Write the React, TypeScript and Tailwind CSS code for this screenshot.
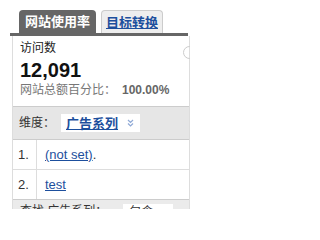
import React from "react";

export default function App() {
  return (
    <div
      className="relative w-[190px] h-[209px] overflow-hidden bg-white"
      style={{ fontFamily: '"Liberation Sans", "Noto Sans CJK SC", sans-serif' }}
    >
      <div className="flex items-end gap-[5px] pl-[19px] pt-[10px] h-[33px]">
        <div className="flex h-[23px] w-[77px] items-center justify-center rounded-t-[4px] bg-[#666666] text-[13px] font-bold leading-none text-white">
          网站使用率
        </div>
        <div className="flex h-[23px] w-[62px] items-center justify-center rounded-t-[4px] border border-b-0 border-[#cccccc] bg-[#eeeeee] text-[13px] font-bold leading-none text-[#1d4f9d] underline">
          目标转换
        </div>
      </div>
      <div className="ml-[10px] h-[3px] w-[178px] bg-[#666666]" />
      <div className="ml-[12px] w-[178px] border-l border-r border-[#dddddd]">
        <div className="relative pl-[7px] pt-[4px] pb-[8px]">
          <div className="text-[12px] leading-[16px] text-[#222222]">访问数</div>
          <div className="mt-[3px] text-[20px] font-bold leading-[23px] text-[#111111]">12,091</div>
          <div className="flex items-center text-[12px] leading-[16px] text-[#777777]">
            <span>网站总额百分比：</span>
            <span className="ml-[6px] font-bold text-[#666666]">100.00%</span>
          </div>
          <div className="absolute left-[170px] top-[10px] h-[13px] w-[13px] rounded-full border border-[#cccccc]" />
        </div>
        <div className="flex h-[34px] items-center border-t border-b border-[#cccccc] bg-[#e6e6e6] pl-[6px]">
          <span className="text-[12px] text-[#333333]">维度：</span>
          <div className="ml-[6px] flex h-[18px] w-[79px] items-center bg-white pl-[5px]">
            <span className="text-[13px] font-bold leading-none text-[#1d4f9d] underline">广告系列</span>
            <svg className="ml-[9px]" width="7" height="10" viewBox="0 0 7 10">
              <path d="M1 2 L3.5 4.5 L6 2 M1 5.5 L3.5 8 L6 5.5" fill="none" stroke="#8fa9d6" strokeWidth="1.2" />
            </svg>
          </div>
        </div>
        <div className="flex h-[30px] border-b border-[#dddddd]">
          <div className="flex w-[24px] items-center border-r border-[#dddddd] pl-[5px] text-[13px] text-[#333333]">1.</div>
          <div className="flex items-center pl-[8px] text-[13px] text-[#333333]">
            <span className="text-[#1d4f9d] underline">(not set)</span>
            <span>.</span>
          </div>
        </div>
        <div className="flex h-[29px]">
          <div className="flex w-[24px] items-center border-r border-[#dddddd] pl-[5px] text-[13px] text-[#333333]">2.</div>
          <div className="flex items-center pl-[8px] text-[13px]">
            <span className="text-[#1d4f9d] underline">test</span>
          </div>
        </div>
        <div className="flex h-[30px] items-start border-t border-[#cccccc] bg-[#ebebeb] pl-[7px] pt-[3px]">
          <span className="text-[12px] leading-[16px] text-[#333333]">查找 广告系列：</span>
          <div className="ml-[16px] mt-[1px] h-[18px] w-[50px] bg-white pl-[6px] text-[12px] leading-[16px] text-[#333333]">包含</div>
        </div>
      </div>
    </div>
  );
}
